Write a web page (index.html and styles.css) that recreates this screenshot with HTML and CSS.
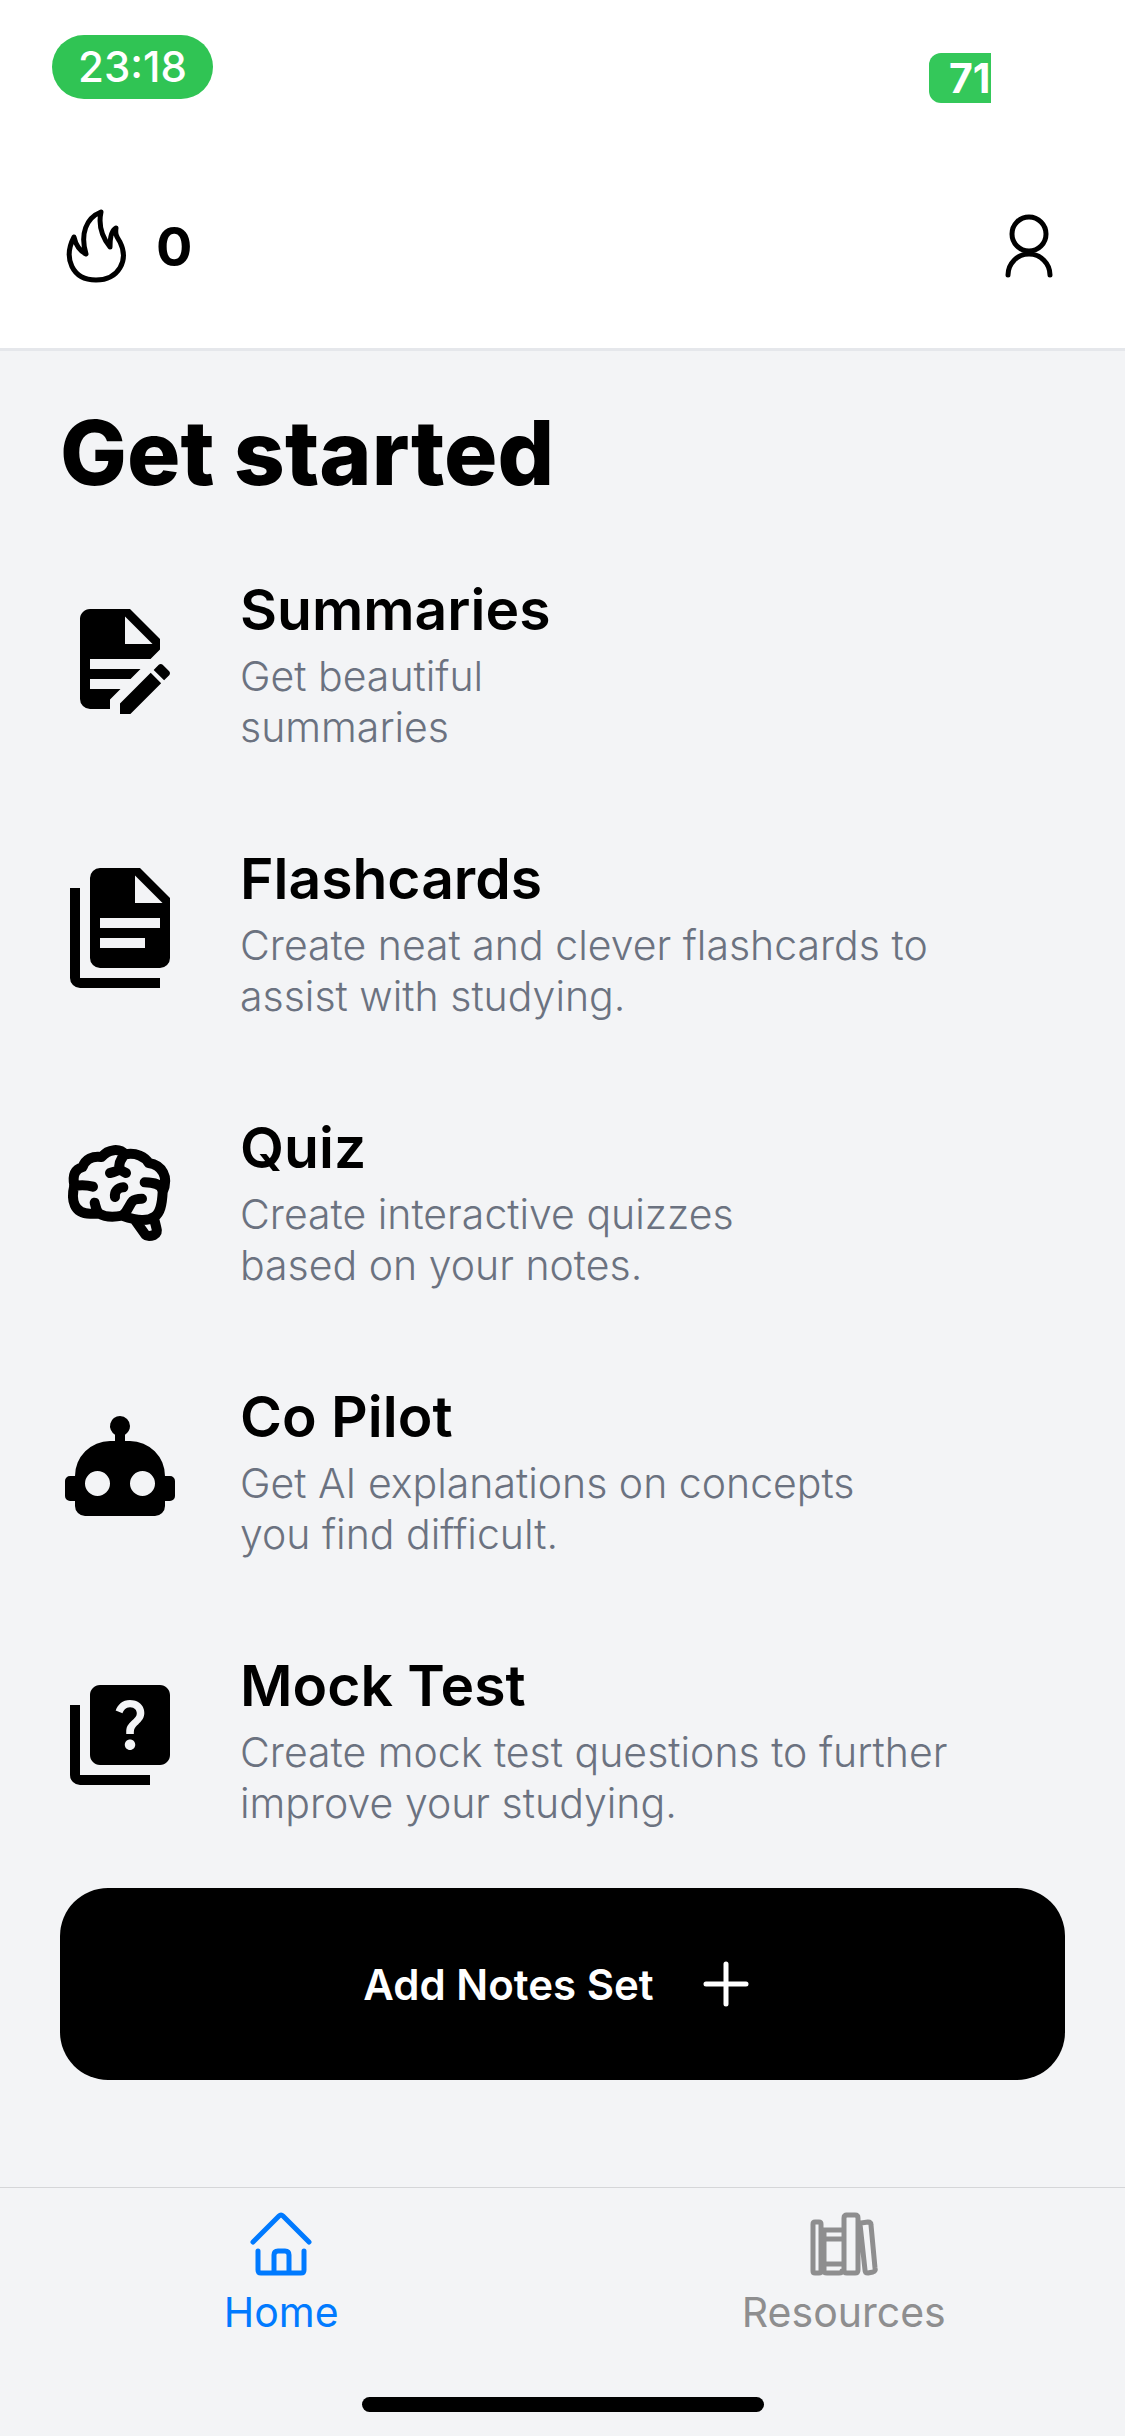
FILE: index.html
```html
<!DOCTYPE html>
<html lang="en">
<head>
<meta charset="utf-8">
<meta name="viewport" content="width=device-width, initial-scale=1">
<title>Get started</title>
<link rel="stylesheet" href="styles.css">
</head>
<body>
<div class="app">
  <header class="header">
    <div class="status">
      <span class="time">23:18</span>
      <span class="battery">71</span>
    </div>
    <div class="toolbar">
      <div class="streak">
        <svg class="flame" viewBox="60 203 72 84" aria-hidden="true"><path d="M101 211C86 217 80 233 86 253C80 250 76 245 74 236C63 257 72 279 96 279C119 279 129 259 120 241C117 236 115 234 116 227C112 229 110 235 110 246C102 236 98 225 101 211Z"/></svg>
        <span>0</span>
      </div>
      <a class="profile" href="#profile" aria-label="Profile">
        <svg viewBox="993 210 72 72" aria-hidden="true"><circle cx="1029" cy="234" r="17"/><path d="M1008 275a21 21 0 0 1 42 0"/></svg>
      </a>
    </div>
  </header>

  <main class="main">
    <h1>Get started</h1>
    <ul class="features">
      <li>
        <svg viewBox="0 0 24 24" aria-hidden="true"><path d="M6 2C4.9 2 4 2.9 4 4v16a2 2 0 0 0 2 2h4v-1.9L12.1 18H6v-2h8.1l2-2H6v-2h12.1l1.9-1.9V8l-6-6H6m7 1.500L18.500 9H13V3.500M20.150 13c-.15 0-.29.050-.4.160l-1.020 1.020 2.090 2.080 1.020-1.010c.21-.22.21-.58 0-.79l-1.300-1.300a.55.55 0 0 0-.39-.16m-2.010 1.770L12 20.920V23h2.080l6.150-6.150-2.090-2.080Z"/></svg>
        <div><h2>Summaries</h2><p>Get beautiful<br>summaries</p></div>
      </li>
      <li>
        <svg viewBox="0 0 24 24" aria-hidden="true"><path fill-rule="evenodd" d="M6 2a2 2 0 0 1 2-2h8l6 6v12a2 2 0 0 1-2 2H8a2 2 0 0 1-2-2V2Zm9-.5V7h5.500L15 1.500ZM8 10v2h12v-2H8Zm0 4v2h9v-2H8ZM2 4h2v18h16v2H4a2 2 0 0 1-2-2V4Z"/></svg>
        <div><h2>Flashcards</h2><p>Create neat and clever flashcards to<br>assist with studying.</p></div>
      </li>
      <li>
        <svg class="brain" viewBox="0 0 360 360" aria-hidden="true"><path d="M43 145C36 110 48 96 68 90C76 66 98 56 125 60C145 35 180 33 195 52C228 45 256 60 266 78C306 84 328 120 308 165C308 140 280 137 254 136M43 145C32 190 42 230 90 230H118C108 222 108 212 104 197M42 147C60 144 80 144 99 149M195 52C180 68 176 85 179 96C170 104 160 106 150 108M179 96Q190 105 198 108M190 151C172 152 163 165 165 180M118 230C138 242 165 240 187 236C205 222 208 202 218 192C226 185 236 185 246 185M308 165C306 205 300 228 284 239C262 254 235 252 187 236M226 251L256 293Q264 301 282 294Q294 287 289 272L282 244"/></svg>
        <div><h2>Quiz</h2><p>Create interactive quizzes<br>based on your notes.</p></div>
      </li>
      <li>
        <svg viewBox="0 0 24 24" aria-hidden="true"><path fill-rule="evenodd" d="M12 2a2 2 0 0 1 2 2c0 .74-.4 1.390-1 1.730V7h1a7 7 0 0 1 7 7h1a1 1 0 0 1 1 1v3a1 1 0 0 1-1 1h-1v1a2 2 0 0 1-2 2H5a2 2 0 0 1-2-2v-1H2a1 1 0 0 1-1-1v-3a1 1 0 0 1 1-1h1a7 7 0 0 1 7-7h1V5.730A2 2 0 0 1 12 2ZM7.500 13a2.500 2.500 0 1 0 0 5 2.500 2.500 0 0 0 0-5Zm9 0a2.500 2.500 0 1 0 0 5 2.500 2.500 0 0 0 0-5Z"/></svg>
        <div><h2>Co Pilot</h2><p>Get AI explanations on concepts<br>you find difficult.</p></div>
      </li>
      <li>
        <svg viewBox="0 0 24 24" aria-hidden="true"><path d="M4 6H2v14a2 2 0 0 0 2 2h14v-2H4V6zm16-4H8c-1.100 0-2 .9-2 2v12c0 1.100.9 2 2 2h12c1.100 0 2-.9 2-2V4c0-1.100-.9-2-2-2zm-5.990 13c-.59 0-1.050-.47-1.050-1.050 0-.59.47-1.040 1.050-1.040.59 0 1.040.45 1.040 1.040-.01.58-.45 1.050-1.040 1.050zm2.500-6.170c-.63.93-1.230 1.210-1.560 1.810-.13.24-.18.4-.18 1.180h-1.520c0-.41-.06-1.080.26-1.650.41-.73 1.180-1.160 1.630-1.800.48-.68.21-1.940-1.140-1.940-.88 0-1.320.67-1.500 1.230l-1.370-.57C11.510 5.960 12.520 5 13.990 5c1.230 0 2.080.56 2.510 1.260.37.61.58 1.730.01 2.570z"/></svg>
        <div><h2>Mock Test</h2><p>Create mock test questions to further<br>improve your studying.</p></div>
      </li>
    </ul>
    <button class="add" type="button">
      Add Notes Set
      <svg viewBox="0 0 72 72" aria-hidden="true"><path d="M36 16v40M16 36h40"/></svg>
    </button>
  </main>

  <nav class="tabs">
    <a class="active" href="#home">
      <svg viewBox="245 2208 72 72" aria-hidden="true"><path d="M253 2242L279 2216Q281 2214 283 2216L309 2242M258 2251V2270Q258 2273 261 2273H301Q304 2273 304 2270V2251M274 2273V2255Q274 2251 278 2251H285Q289 2251 289 2255V2273"/></svg>
      <span>Home</span>
    </a>
    <a href="#resources">
      <svg viewBox="808 2208 72 72" aria-hidden="true"><path d="M815 2222H819Q821 2222 821 2224V2271Q821 2273 819 2273H815Q813 2273 813 2271V2224Q813 2222 815 2222ZM824 2230H842M824 2239H842M824 2264H842M824 2230V2271Q824 2273 827 2273H839Q842 2273 842 2271M846 2215H855Q858 2215 858 2218V2270Q858 2273 855 2273H847Q844 2273 844 2270V2218Q844 2215 847 2215M861 2223L868 2222Q871 2222 871 2225L875 2268Q876 2271 873 2272L868 2273Q865 2273 865 2270L860 2224Z"/></svg>
      <span>Resources</span>
    </a>
  </nav>
  <div class="indicator"></div>
</div>
</body>
</html>
```
FILE: styles.css
```css
* { box-sizing: border-box; margin: 0; padding: 0; }
body { font-family: Inter, "Liberation Sans", sans-serif; background: #f3f4f6; color: #000; }
a { color: inherit; text-decoration: none; }
svg { display: block; flex: none; }

.app { display: flex; flex-direction: column; min-height: 100vh; }

.header { background: #fff; border-bottom: 3px solid #e5e7eb; padding-bottom: 60px; }
.status { display: flex; justify-content: space-between; align-items: flex-end; height: 103px; padding: 0 134px 0 52px; }
.time { width: 161px; height: 64px; margin-bottom: 4px; border-radius: 32px; background: #30c454; color: #fff; font-size: 42px; font-weight: 500; line-height: 64px; text-align: center; }
.battery { width: 62px; height: 50px; padding-left: 20px; overflow: hidden; border-radius: 12px 0 0 12px; background: #34c85a; color: #fff; font-size: 41px; font-weight: 700; line-height: 50px; }
.toolbar { display: flex; justify-content: space-between; align-items: center; height: 84px; margin-top: 101px; padding: 0 60px; }
.streak { display: flex; align-items: center; gap: 24px; font-size: 54px; font-weight: 700; }
.flame { width: 72px; height: 84px; fill: none; stroke: #000; stroke-width: 5; stroke-linejoin: round; }
.profile svg { width: 72px; height: 72px; fill: none; stroke: #000; stroke-width: 5; stroke-linecap: round; }

.main { padding: 48px 60px; }
h1 { font-size: 89px; font-weight: 800; line-height: 108px; }
.features { display: flex; flex-direction: column; gap: 80px; margin-top: 57px; list-style: none; }
.features li { display: flex; align-items: center; gap: 60px; }
.features li > div { padding-top: 10px; }
.features svg { width: 120px; height: 120px; }
.features .brain { fill: none; stroke: #000; stroke-width: 30; stroke-linecap: round; stroke-linejoin: round; }
h2 { margin-bottom: 5px; font-size: 57px; font-weight: 600; line-height: 72px; }
.features p { color: #6b7280; font-size: 41px; font-weight: 300; line-height: 51px; }
.add { display: flex; justify-content: center; align-items: center; gap: 36px; width: 100%; height: 192px; margin-top: 59px; border: 0; border-radius: 48px; background: #000; color: #fff; font: inherit; font-size: 42px; font-weight: 600; }
.add svg { width: 72px; height: 72px; fill: none; stroke: #fff; stroke-width: 5; stroke-linecap: round; }

.tabs { display: flex; margin-top: auto; padding-top: 20px; border-top: 1px solid #d5d6d8; color: #8e8e8f; }
.tabs a { display: flex; flex: 1; flex-direction: column; align-items: center; gap: 6px; font-size: 41px; line-height: 52px; }
.tabs .active { color: #007aff; }
.tabs svg { width: 72px; height: 72px; fill: none; stroke: currentColor; stroke-width: 5; stroke-linecap: round; stroke-linejoin: round; }
.indicator { width: 402px; height: 15px; margin: 59px auto 24px; border-radius: 8px; background: #000; }
```
